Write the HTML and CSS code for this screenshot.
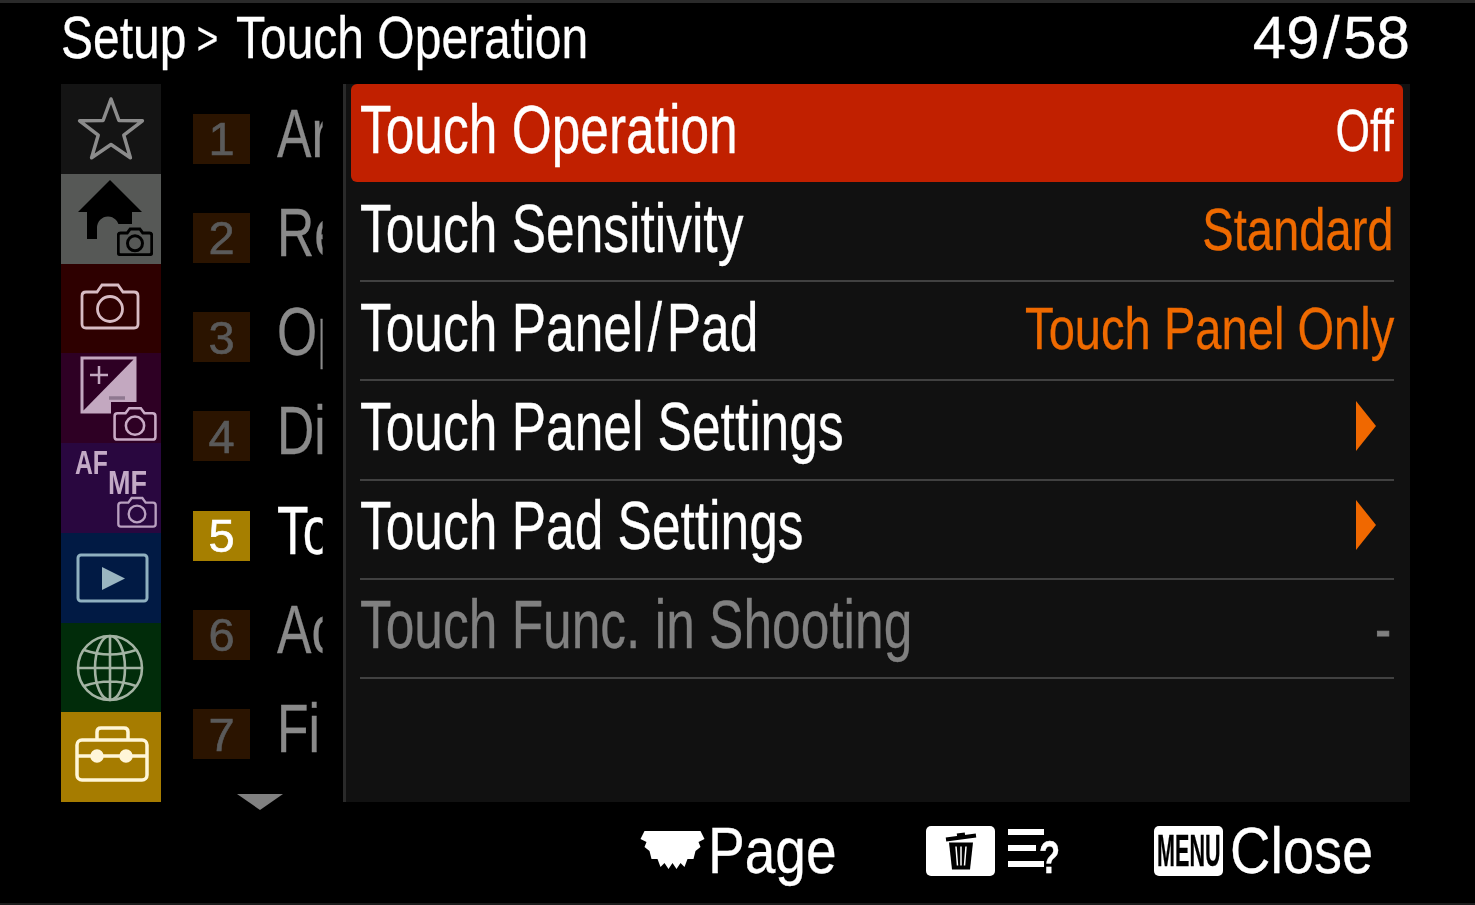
FILE: index.html
```html
<!DOCTYPE html>
<html>
<head>
  <meta charset="utf-8">
  <title>Touch Operation</title>
  <link rel="stylesheet" href="styles.css">
</head>
<body>
<svg class="defs" width="0" height="0">
  <symbol id="cam" viewBox="0 0 60 48">
    <path d="M6 10H17L22 3H38L43 10H54Q58 10 58 14V42Q58 46 54 46H6Q2 46 2 42V14Q2 10 6 10Z" fill="none" stroke="currentColor"/>
    <circle cx="30" cy="27" r="12.5" fill="none" stroke="currentColor"/>
  </symbol>
</svg>
<div class="screen">
  <header class="topbar">
    <div class="crumb"><span>Setup</span><span class="crumb-sep">&gt;</span><span>Touch Operation</span></div>
    <div class="pageno">49<span class="slash">/</span>58</div>
  </header>

  <main class="main">
    <nav class="tabs">
      <div class="tab tab-fav">
        <svg viewBox="0 0 100 90"><polygon points="50,15 57.9,36.5 81.4,36.8 62.8,51.2 69.4,73.7 50,60.5 30.6,73.7 37.2,51.2 18.6,36.8 42.1,36.5" fill="none" stroke="#8c8c8c" stroke-width="3.5" stroke-linejoin="round"/></svg>
      </div>
      <div class="tab tab-home">
        <svg viewBox="0 0 100 90">
          <path d="M49 6L81 38H71V52H58V54A10.5 11 0 0 0 36 54V65H26V38H17Z" fill="#000"/>
          <rect x="54" y="50" width="40" height="34" fill="#565856"/>
          <use href="#cam" x="56" y="53" width="36" height="29" color="#000" stroke-width="5"/>
        </svg>
      </div>
      <div class="tab tab-cam">
        <svg viewBox="0 0 100 90"><use href="#cam" x="19" y="18" width="60" height="48" color="#d8bcc4" stroke-width="2.8"/></svg>
      </div>
      <div class="tab tab-exp">
        <svg viewBox="0 0 100 90">
          <rect x="21" y="5" width="53" height="54" fill="none" stroke="#c3a8c0" stroke-width="3"/>
          <polygon points="74,5 74,59 21,59" fill="#c3a8c0"/>
          <path d="M29 22H47M38 13V31" stroke="#c3a8c0" stroke-width="2.5"/>
          <path d="M48 45H64" stroke="#8f7890" stroke-width="3.5"/>
          <rect x="50" y="49" width="48" height="41" fill="#2e0024"/>
          <use href="#cam" x="52" y="53" width="44" height="35" color="#c9aac6" stroke-width="3.5"/>
        </svg>
      </div>
      <div class="tab tab-af">
        <svg viewBox="0 0 100 90">
          <text class="af-text" x="14" y="31" textLength="33" lengthAdjust="spacingAndGlyphs">AF</text>
          <text class="af-text" x="47" y="51" textLength="39" lengthAdjust="spacingAndGlyphs">MF</text>
          <use href="#cam" x="56" y="53" width="40" height="32" color="#b9a0c0" stroke-width="3.5"/>
        </svg>
      </div>
      <div class="tab tab-play">
        <svg viewBox="0 0 100 90">
          <rect x="17" y="22" width="69" height="46" rx="3" fill="none" stroke="#8fb0c0" stroke-width="3"/>
          <polygon points="41,34 64,45.5 41,57" fill="#9ab5c0"/>
        </svg>
      </div>
      <div class="tab tab-net">
        <svg viewBox="0 0 100 90" fill="none" stroke="#a3b3a3" stroke-width="2.6">
          <circle cx="49" cy="45" r="32"/>
          <ellipse cx="49" cy="45" rx="15" ry="32"/>
          <path d="M49 13V77M17 45H81M23 27Q49 36 75 27M23 63Q49 54 75 63"/>
        </svg>
      </div>
      <div class="tab tab-setup">
        <svg viewBox="0 0 100 90" fill="none" stroke="#fff6d8" stroke-width="3.5">
          <rect x="16" y="28" width="70" height="40" rx="5"/>
          <path d="M36 28V20Q36 16 40 16H63Q67 16 67 20V28M16 44H86"/>
          <circle cx="36" cy="44" r="5" fill="#fff6d8"/>
          <circle cx="65" cy="44" r="5" fill="#fff6d8"/>
        </svg>
      </div>
    </nav>

    <section class="sections">
      <div class="sec"><span class="num">1</span><span class="sec-name">Ar</span></div>
      <div class="sec"><span class="num">2</span><span class="sec-name">Re</span></div>
      <div class="sec"><span class="num">3</span><span class="sec-name">Op</span></div>
      <div class="sec"><span class="num">4</span><span class="sec-name">Di</span></div>
      <div class="sec sec-on"><span class="num">5</span><span class="sec-name">To</span></div>
      <div class="sec"><span class="num">6</span><span class="sec-name">Ac</span></div>
      <div class="sec"><span class="num">7</span><span class="sec-name">Fin</span></div>
      <div class="more"></div>
    </section>

    <section class="panel">
      <div class="row row-on"><span class="label">Touch Operation</span><span class="value">Off</span></div>
      <div class="row"><span class="label">Touch Sensitivity</span><span class="value">Standard</span></div>
      <div class="row"><span class="label">Touch Panel<span class="slash-wide">/</span>Pad</span><span class="value">Touch Panel Only</span></div>
      <div class="row"><span class="label">Touch Panel Settings</span><span class="arrow"></span></div>
      <div class="row"><span class="label">Touch Pad Settings</span><span class="arrow"></span></div>
      <div class="row row-off"><span class="label">Touch Func. in Shooting</span><span class="value">-</span></div>
    </section>
  </main>

  <footer class="footer">
    <svg class="wheel" viewBox="0 0 64 40"><polygon points="4,2 60,2 64,10 58,13 60,18 55,22 53,30 47,30 44,38 40,34 36,40 32,34 28,40 24,34 20,38 17,30 11,30 9,22 4,18 6,13 0,10" fill="#fff"/></svg>
    <span class="word word-page">Page</span>
    <span class="key">
      <svg class="trash" viewBox="0 0 32 40">
        <path d="M4 12L7 39H25L28 12Z" fill="#000"/>
        <path d="M1 9L31 5M12 5L20 4" stroke="#000" stroke-width="4"/>
        <path d="M11 16L12.5 35M16 16V35M21 16L19.5 35" stroke="#fff" stroke-width="1.5"/>
      </svg>
    </span>
    <span class="help">
      <svg class="lines" viewBox="0 0 36 40"><path d="M0 3H36M0 19H28M0 35H36" stroke="#fff" stroke-width="6"/></svg>
      <span class="qmark">?</span>
    </span>
    <span class="key"><span class="menu-word">MENU</span></span>
    <span class="word word-close">Close</span>
  </footer>
</div>
</body>
</html>
```

FILE: styles.css
```css
* { box-sizing: border-box; }
html, body { margin: 0; padding: 0; background: #000; }
body { color: #fff; font-family: "Liberation Sans", sans-serif; -webkit-text-stroke: .3px; }
.defs { position: absolute; }

.screen { width: 1475px; height: 905px; display: flex; flex-direction: column; border-top: 3px solid #2a2a2a; border-bottom: 2px solid #1c1c1c; overflow: hidden; filter: blur(.5px); }

.topbar { height: 81px; flex: none; padding: 0 65px 12px 61px; display: flex; justify-content: space-between; align-items: center; font-size: 60px; }
.crumb { display: flex; align-items: center; white-space: nowrap; transform: scaleX(.8); transform-origin: left; }
.crumb-sep { margin: 0 22px 0 13px; font-size: 46px; }
.slash { margin: 0 3.5px; }

.main { height: 718px; flex: none; margin: 0 65px 0 61px; display: flex; }

.tabs { width: 100px; flex: none; display: grid; grid-template-rows: repeat(8, minmax(0, 1fr)); }
.tab { overflow: hidden; }
.tab svg { display: block; width: 100px; height: 90px; }
.tab-fav { background: #141414; }
.tab-home { background: #565856; }
.tab-cam { background: #2e0000; }
.tab-exp { background: #2e0024; }
.tab-af { background: #29073f; }
.tab-play { background: #011a44; }
.tab-net { background: #012c0a; }
.tab-setup { background: #a67c00; }
.af-text { font-size: 33px; font-weight: bold; fill: #c3aac6; }

.sections { width: 182px; flex: none; position: relative; padding: 0 0 0 32px; }
.sec { height: 99.25px; display: flex; align-items: center; gap: 27px; color: #8a8a8a; padding-top: 10px; }
.num { width: 57px; height: 50px; flex: none; display: flex; align-items: center; justify-content: center; background: #2b1400; color: #5a5a5a; font-size: 47px; -webkit-text-stroke: .6px; }
.sec-name { width: 60px; margin-bottom: 12px; overflow: hidden; white-space: nowrap; font-size: 68px; transform: scaleX(.76); transform-origin: left; }
.sec-on { color: #fff; }
.sec-on .num { background: #a67f00; color: #fff; }
.more { position: absolute; left: 76px; bottom: -8px; border-style: solid; border-width: 16px 23px 0; border-color: #808080 transparent transparent; }

.panel { flex: 1; background: #111; border-left: 3px solid #2a2a2a; }
.row { height: 99.25px; margin: 0 16px 0 14px; display: flex; justify-content: space-between; align-items: center; border-bottom: 2px solid #414141; white-space: nowrap; }
.row-on { height: 98px; margin: 0 7px 1px 5px; padding: 0 9px; background: #c12000; border: 0; border-radius: 6px; }
.row:nth-child(2) { height: 99px; }
.label { font-size: 68px; padding-bottom: 8px; transform: scaleX(.757); transform-origin: left; }
.slash-wide { margin: 0 6px; }
.value { font-size: 60px; padding-bottom: 5px; color: #ef6a00; transform: scaleX(.785); transform-origin: right; }
.row-on .value { color: #fff; transform: scaleX(.74); padding-bottom: 6px; }
.row-off .label, .row-off .value { color: #808080; }
.row-off .value { padding-bottom: 0; margin-right: 3px; -webkit-text-stroke: 1px; }
.arrow { margin: 0 18px 8px 0; border-style: solid; border-width: 25px 0 25px 20px; border-color: transparent transparent transparent #f06800; }

.footer { flex: 1; display: flex; justify-content: flex-end; align-items: center; padding: 0 104px 4px 0; font-size: 64px; }
.wheel { width: 65px; height: 40px; margin: 0 3px 4px 0; }
.word { white-space: nowrap; transform: scaleX(.86); transform-origin: left; }
.word-page { width: 125px; margin-right: 93px; }
.word-close { width: 141px; margin-left: 7px; transform: scaleX(.875); }
.key { width: 69px; height: 50px; flex: none; background: #fff; border-radius: 5px; display: flex; align-items: center; justify-content: center; }
.trash { width: 32px; height: 41px; }
.help { width: 51px; margin: 0 95px 0 13px; display: flex; align-items: flex-start; height: 50px; padding-top: 3px; }
.lines { width: 36px; height: 40px; flex: none; }
.qmark { font-size: 46px; font-weight: bold; line-height: 46px; margin: 5px 0 0 -5px; transform: scaleX(.75); transform-origin: left; }
.menu-word { flex: none; color: #000; font-size: 44px; font-weight: bold; transform: scaleX(.49); }
```
